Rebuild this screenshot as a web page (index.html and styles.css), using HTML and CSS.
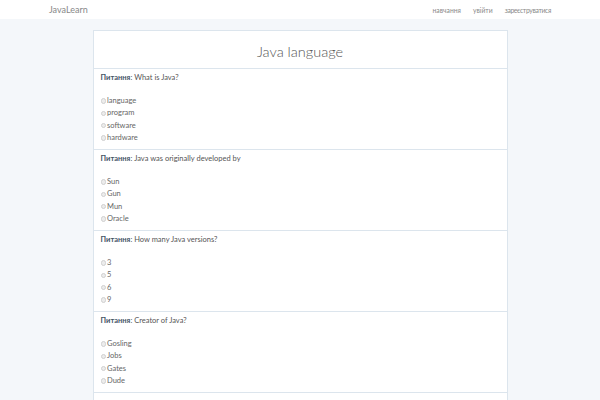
FILE: index.html
```html
<!DOCTYPE html>
<html>
<head>
<meta charset="utf-8">
<link rel="stylesheet" href="styles.css">
</head>
<body>
<nav class="navbar">
  <a class="brand">JavaLearn</a>
  <div class="links">
    <a>навчання</a>
    <a>увійти</a>
    <a class="long">зареєструватися</a>
  </div>
</nav>
<main class="page">
  <section class="card">
    <header class="card-head"><h1>Java language</h1></header>
    <div class="q">
      <p class="qt"><b>Питання</b>: What is Java?</p>
      <ul class="opts">
        <li><span class="radio"></span>language</li>
        <li><span class="radio"></span>program</li>
        <li><span class="radio"></span>software</li>
        <li><span class="radio"></span>hardware</li>
      </ul>
    </div>
    <div class="q">
      <p class="qt"><b>Питання</b>: Java was originally developed by</p>
      <ul class="opts">
        <li><span class="radio"></span>Sun</li>
        <li><span class="radio"></span>Gun</li>
        <li><span class="radio"></span>Mun</li>
        <li><span class="radio"></span>Oracle</li>
      </ul>
    </div>
    <div class="q">
      <p class="qt"><b>Питання</b>: How many Java versions?</p>
      <ul class="opts">
        <li><span class="radio"></span>3</li>
        <li><span class="radio"></span>5</li>
        <li><span class="radio"></span>6</li>
        <li><span class="radio"></span>9</li>
      </ul>
    </div>
    <div class="q">
      <p class="qt"><b>Питання</b>: Creator of Java?</p>
      <ul class="opts">
        <li><span class="radio"></span>Gosling</li>
        <li><span class="radio"></span>Jobs</li>
        <li><span class="radio"></span>Gates</li>
        <li><span class="radio"></span>Dude</li>
      </ul>
    </div>
    <div class="q-empty"></div>
  </section>
</main>
</body>
</html>
```
FILE: styles.css
```css
* { box-sizing: border-box; }
html, body { margin: 0; padding: 0; }
body {
  font-family: "Lato", "Open Sans", sans-serif;
  background: #f4f7fa;
  color: #444;
  height: 400px;
  overflow: hidden;
}
.navbar {
  height: 19px;
  background: #fff;
  display: flex;
  align-items: center;
  justify-content: space-between;
  padding: 0 49px 0 49px;
  font-size: 6.8px;
  color: #777;
}
.brand { color: #888; font-size: 9px; }
.links { display: flex; gap: 12px; }
.links a { color: #8a8a8a; }
.links .long { letter-spacing: -0.35px; }
.page {
  padding-top: 11px;
  display: flex;
  justify-content: center;
}
.card {
  width: 415px;
  background: #fff;
  border: 1px solid #dce5ed;
  border-bottom: none;
}
.card-head {
  height: 38px;
  border-bottom: 1px solid #dce5ed;
  display: flex;
  align-items: center;
  justify-content: center;
}
.card-head h1 {
  margin: 0;
  font-weight: 300;
  font-size: 14.5px;
  color: #555;
  padding-top: 4px;
}
.q {
  height: 81px;
  border-bottom: 1px solid #dce5ed;
  padding: 2.5px 7px 0;
  font-size: 7.5px;
}
.q-empty { height: 20px; }
.qt {
  margin: 0;
  line-height: 12px;
  height: 23.5px;
  color: #555;
}
.qt b { color: #445566; font-weight: 700; }
.opts { list-style: none; margin: 0; padding: 0; }
.opts li {
  height: 12.3px;
  line-height: 12.3px;
  display: flex;
  align-items: center;
  color: #666;
}
.radio {
  width: 5.5px;
  height: 5.5px;
  border-radius: 50%;
  background: #ececec;
  border: 1px solid #d0d0d0;
  margin-right: 1px;
  display: inline-block;
}
```
